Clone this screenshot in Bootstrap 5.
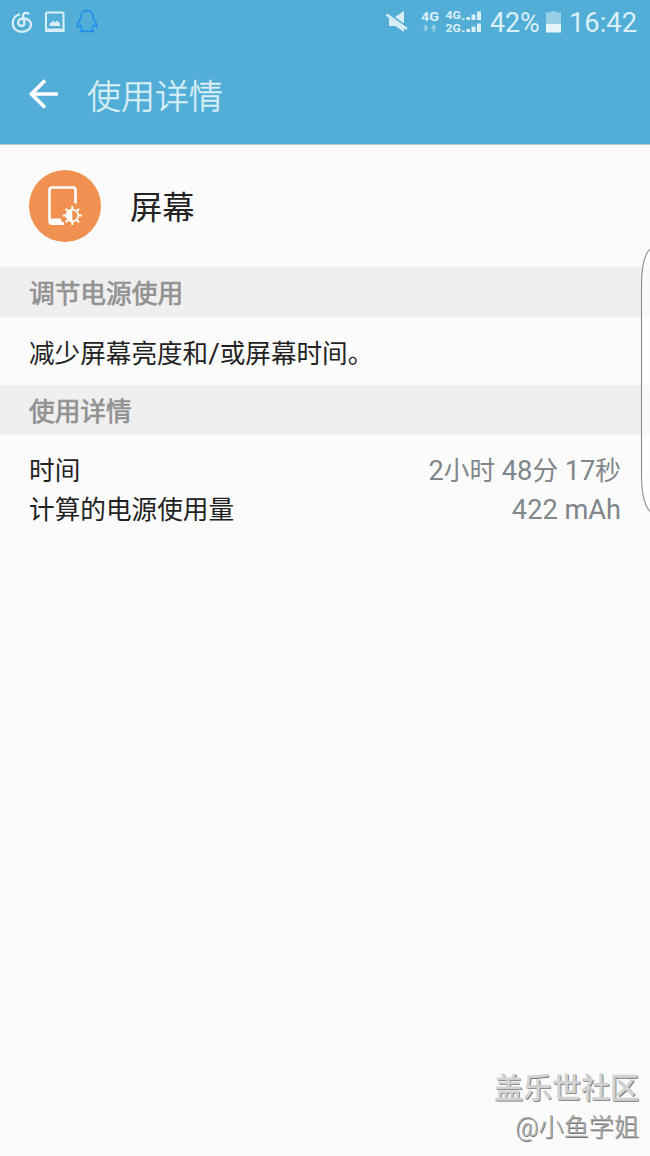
<!DOCTYPE html>
<html lang="zh-CN">
<head>
<meta charset="utf-8">
<meta name="viewport" content="width=device-width, initial-scale=1">
<title>使用详情</title>
<link href="https://cdn.jsdelivr.net/npm/bootstrap@5.3.0/dist/css/bootstrap.min.css" rel="stylesheet">
<style>
body{font-family:Roboto,"Noto Sans CJK SC",sans-serif;background:#fbfbfb;color:#222;height:1156px;overflow:hidden}
.app-top{background:#52aed6;height:145px;border-bottom:1px solid #b4c8d1;color:#daf0f8}
.status{height:45px;font-size:27.3px;line-height:45px}
.status svg{display:block;flex:none}
.status span{padding-top:1px}
.pct{font-size:26.8px}
.clock{margin:0 13px 0 8px}
.app-title{font-size:34px;line-height:50px;font-weight:300;color:#d8eff8;padding-top:5px;-webkit-text-stroke:.5px #d8eff8}
.app-row{height:122px;padding-left:29px}
.disc{width:72px;height:72px;background:#f09151}
.app-name{font-size:32.3px;line-height:48px;margin-left:29px;padding-top:4px}
.section-bar{height:50px;line-height:55px;background:#efefef;color:#929292;font-size:25.7px;padding-left:29px;-webkit-text-stroke:.7px #929292}
.tip{height:68px;line-height:75px;padding-left:29px;font-size:25.6px}
.slash{font-size:28px;line-height:1}
.usage{padding:17px 29px 0 29px;font-size:25.65px;line-height:38.5px}
.val{color:#80868a}
.val b{font-weight:400;font-size:27.2px}
.edge{right:0;top:246px}
.mark-lines{right:11px;bottom:10px;color:#d2d2d2;text-shadow:1px 1px 0 #777}
.community{font-size:29px;line-height:39px;font-weight:500;-webkit-text-stroke:.3px #d2d2d2}
.author{font-size:25.2px;line-height:37px;font-weight:300;color:#aaa}
</style>
</head>
<body class="position-relative">
<header class="app-top">
  <div class="status d-flex align-items-center">
    <svg width="375" height="45" viewBox="0 0 375 45" fill="none">
      <path d="M19 14.500C9.500 18 11 31.800 22 31.800C33 31.800 34.500 18.500 23.500 18.500C17 18.500 16.500 26 21.500 26C27 26 23 18.500 23 15.500Q23.500 11.800 28.500 13.500" stroke="#d9eff8" stroke-width="2.300" stroke-linecap="round"/>
      <rect x="46" y="12.500" width="17.500" height="18.500" rx="1" stroke="#d9eff8" stroke-width="2"/><path d="M45 28.500h19.500V32H45zM49.500 26v-2.500l2-1 1.500-2 2 2 2-2 2 2 1 1V26z" fill="#d9eff8"/>
      <path d="M81 18C80.500 13 83 10.500 87 10.500S93.500 13 93 18C95 20.500 97 23.500 96.500 27L93.500 25Q93 28 91.500 29.500L93.500 31.500H88L87 30.500 86 31.500H80.500L82.500 29.500Q81 28 80.500 25L77.500 27C77 23.500 79 20.500 81 18Z" stroke="#198ced" stroke-width="1.300"/>
    </svg>
    <svg width="115" height="45" viewBox="375 0 115 45" fill="#d9eff8">
      <path d="M395 17l9-6v12.500zM389 17.500L404 28v4L395.500 26H389z"/><path d="M386.500 14.500l20.500 14.500" stroke="#d9eff8" stroke-width="2.500"/>
      <g font-family="Roboto" font-weight="700"><text x="421" y="21" font-size="13" textLength="18" lengthAdjust="spacingAndGlyphs">4G</text><g font-size="11"><text x="445.500" y="19" textLength="15.500" lengthAdjust="spacingAndGlyphs">4G</text><text x="445.500" y="32.300" textLength="15.500" lengthAdjust="spacingAndGlyphs">2G</text></g></g>
      <path opacity=".5" d="M424.500 25h2.500v3h2l-3.200 3.500-3.300-3.500h2zM432.500 31.500h2.500v-3.500h2l-3.200-3.500-3.300 3.500h2z"/>
      <path d="M462 18.500h2.500V20H462zM466.500 17h3.500v3h-3.500zM471.500 14.500h4V20h-4zM477 11.500h4V20h-4zM462 30.500h2.500V32H462zM466.500 29h3.500v3h-3.500zM471.500 26.500h4V32h-4zM477 23.500h4V32h-4z"/>
    </svg>
    <span class="pct">42%</span>
    <svg class="ms-auto" width="15" height="45" viewBox="0 0 15 45"><path d="M0 12.500h5v-1.500h5v1.500h5V24H0z" fill="#98d0e7"/><path d="M0 24h15v8.500H0z" fill="#e5f4fa"/></svg>
    <span class="clock">16:42</span>
  </div>
  <div class="d-flex align-items-center pt-1">
    <svg width="87" height="90" viewBox="0 49 87 90" fill="none" stroke="#fff" stroke-width="3.700"><path d="M45 80.500L31.500 94 45 107.500M31 94h27"/></svg>
    <span class="app-title mb-0">使用详情</span>
  </div>
</header>
<main>
  <div class="app-row d-flex align-items-center">
    <div class="disc rounded-circle">
      <svg class="d-block" width="72" height="72" viewBox="29 170 72 72" fill="none" stroke="#fff"><path d="M64 223.500H52q-2.500 0-2.500-2.500v-31q0-2.500 2.500-2.500h21q2.500 0 2.500 2.500v13.500" stroke-width="2.600"/><path d="M49 218.500h11.500l3 6.500H50z" fill="#fff" stroke="none"/><circle cx="72.300" cy="215.500" r="5.900" stroke-width="1.800"/><path d="M72.300 210v11a5.500 5.500 0 0 1 0-11z" fill="#fff" stroke="none"/><path d="M72.300 206v3M72.300 222v3M62.800 215.500h3M78.800 215.500h3M65.600 208.800l2.100 2.100M77 220.200l2.100 2.100M65.600 222.200l2.100-2.100M77 210.900l2.100-2.100" stroke-width="2"/></svg>
    </div>
    <h1 class="app-name mb-0 fw-normal">屏幕</h1>
  </div>
  <div class="section-bar">调节电源使用</div>
  <div class="tip">减少屏幕亮度和<span class="slash">/</span>或屏幕时间。</div>
  <div class="section-bar">使用详情</div>
  <div class="usage">
    <div class="d-flex justify-content-between"><span>时间</span><span class="val"><b>2</b>小时<b> 48</b>分<b> 17</b>秒</span></div>
    <div class="d-flex justify-content-between"><span>计算的电源使用量</span><span class="val"><b>422 mAh</b></span></div>
  </div>
</main>
<svg class="edge position-absolute" width="10" height="268" viewBox="640 246 10 268"><path d="M651 248C644 254 641.500 269 641.500 285V475C641.500 491 644 506 651 512.500" fill="#fff" fill-opacity=".6" stroke="#8c8c8c" stroke-width="1.100"/></svg>
<footer class="mark-lines position-absolute text-end">
  <div class="community">盖乐世社区</div>
  <div class="author">@小鱼学姐</div>
</footer>
<script src="https://cdn.jsdelivr.net/npm/bootstrap@5.3.0/dist/js/bootstrap.bundle.min.js"></script>
</body>
</html>
